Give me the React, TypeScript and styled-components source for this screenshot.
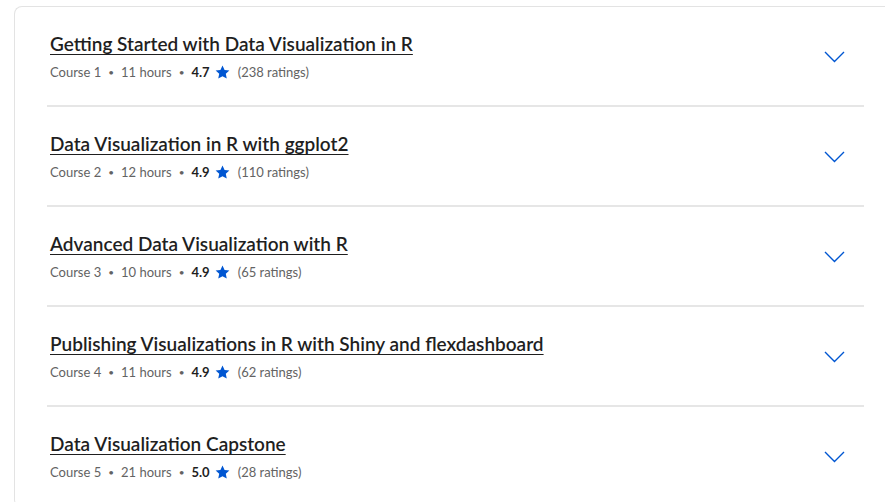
import React from 'react'
import styled, { createGlobalStyle } from 'styled-components'

const GlobalStyle = createGlobalStyle`
  body {
    margin: 0;
    background: #ffffff;
    font-family: 'Lato', 'Noto Sans', sans-serif;
    overflow: hidden;
  }
`

// card continues past the right edge of the frame, so no right border shows
const Card = styled.div`
  margin: 6px 0 0 14px;
  border: 1px solid #e3e3e3;
  border-right: none;
  border-radius: 8px 0 0 8px;
  background: #fff;
  padding-left: 32px;
`

const Row = styled.div`
  width: 817px;
  height: 98px;
  display: flex;
  align-items: flex-start;
  justify-content: space-between;
  border-bottom: 2px solid #e6e6e6;
`

const Info = styled.div`
  padding: 25px 0 0 3px;
  display: flex;
  flex-direction: column;
`

const Title = styled.a`
  font-size: 19px;
  font-weight: 600;
  color: #1f1f1f;
  text-decoration: underline;
  text-underline-offset: 3px;
  text-decoration-thickness: 1px;
  line-height: 24px;
  cursor: pointer;
`

const Meta = styled.div`
  margin-top: 7px;
  display: flex;
  align-items: center;
  font-size: 13px;
  line-height: 18px;
  color: #636363;
`

const Dot = styled.span`
  margin: 0 7px;
  font-size: 10px;
`

const Rating = styled.span`
  font-weight: 700;
  color: #1f1f1f;
`

const Star = styled.svg`
  margin: 0 8px 0 5px;
`

const Toggle = styled.button`
  margin: 44px 19px 0 0;
  padding: 0;
  border: none;
  background: none;
  cursor: pointer;
  display: flex;
`

const courses = [
  { title: 'Getting Started with Data Visualization in R', hours: 11, rating: '4.7', count: 238 },
  { title: 'Data Visualization in R with ggplot2', hours: 12, rating: '4.9', count: 110 },
  { title: 'Advanced Data Visualization with R', hours: 10, rating: '4.9', count: 65 },
  { title: 'Publishing Visualizations in R with Shiny and flexdashboard', hours: 11, rating: '4.9', count: 62 },
  { title: 'Data Visualization Capstone', hours: 21, rating: '5.0', count: 28 },
]

export default function App() {
  return (
    <>
      <GlobalStyle />
      <Card>
        {courses.map((c, i) => (
          <Row key={i}>
            <Info>
              <Title>{c.title}</Title>
              <Meta>
                <span>Course {i + 1}</span>
                <Dot>•</Dot>
                <span>{c.hours} hours</span>
                <Dot>•</Dot>
                <Rating>{c.rating}</Rating>
                <Star width="15" height="14" viewBox="0 0 24 23">
                  <path d="M12 0.8l3.4 7.3 7.9 0.9-5.9 5.4 1.6 7.8L12 18.3l-7 3.9 1.6-7.8L0.7 9l7.9-0.9z" fill="#0056d2" />
                </Star>
                <span>({c.count} ratings)</span>
              </Meta>
            </Info>
            <Toggle aria-label="expand">
              <svg width="21" height="12" viewBox="0 0 21 12">
                <polyline points="1,1 10.5,10.5 20,1" fill="none" stroke="#0056d2" strokeWidth="1.4" />
              </svg>
            </Toggle>
          </Row>
        ))}
      </Card>
    </>
  )
}
